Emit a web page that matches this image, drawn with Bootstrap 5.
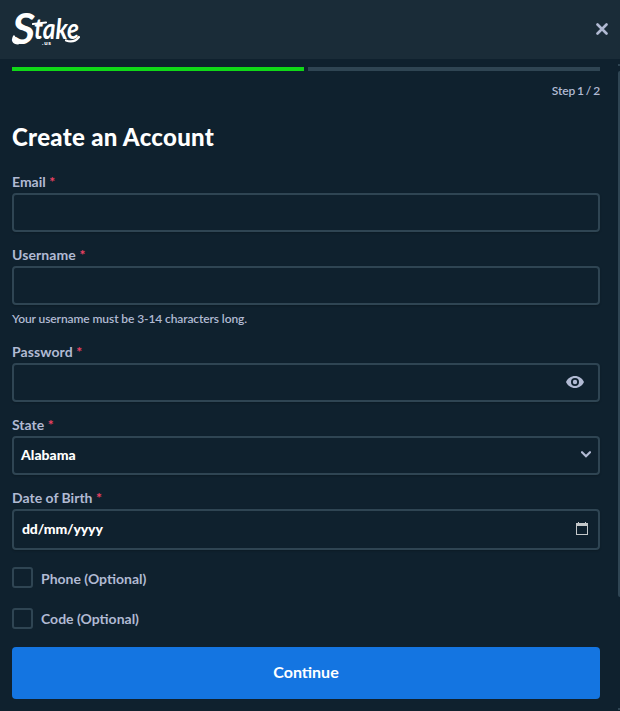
<!DOCTYPE html>
<html lang="en" data-bs-theme="dark">
<head>
<meta charset="utf-8">
<meta name="viewport" content="width=device-width, initial-scale=1">
<title>Create an Account</title>
<link href="https://cdn.jsdelivr.net/npm/bootstrap@5.3.0/dist/css/bootstrap.min.css" rel="stylesheet">
<style>
body{background:#0f212e;color:#b1bad3;font-family:Lato,"Open Sans",sans-serif;height:711px;overflow:hidden;font-size:14px}
.top-bar{height:59px;background:#1a2c38;padding:0 12px}
.brand{overflow:visible}
.close-btn{width:12px;height:12px;margin:-2px 0 0;color:#b1bad3;line-height:0}
.sheet{padding:8px 20px 0 12px}
.steps{gap:4px}
.step-bar{height:4px;background:#2f4553}
.step-bar.done{background:#10d818}
.step-text{font-size:12px;line-height:16px;margin-top:12px;font-weight:600;letter-spacing:-.1px;word-spacing:-1px}
.title{font-size:24px;line-height:30px;font-weight:900;color:#fff;margin:23px 0 0;letter-spacing:.3px}
.fields{margin-top:21px}
.field{margin-bottom:14px}
.field .form-label{display:block;font-size:14px;font-weight:700;line-height:18px;margin:0 0 2px}
.req{color:#ed4163;margin-left:0}
.name-label{letter-spacing:.1px}
.box{height:39px;border:2px solid #2f4553!important;border-radius:4px;background:#0f212e!important;color:#fff;font-size:14px;font-weight:900;letter-spacing:0;padding:0 7px 2px;box-shadow:0 1px 2px #0003}
.box.tall{height:41px;padding:0 10px 2px 8px;letter-spacing:-.15px}
.eye-box{padding:0 14px 1px}
.hint{font-size:12px;line-height:16px;font-weight:600;margin-top:6px;letter-spacing:-.1px}
.field.hinted{margin-bottom:16px}
.form-check.opt{min-height:21px;margin:0;padding:0;gap:8px}
.opt .form-check-input{width:21px;height:21px;margin:0;float:none;border:2px solid #2f4553;border-radius:3px;background-color:#0f212e}
.opt label{font-weight:700;line-height:18px;padding-top:3px}
.opt.phone{margin-top:17px}
.opt.code{margin-top:20px}
.opt.code label{padding-top:2px}
.go{height:52px;background:#1475e1;color:#fff;font-size:16px;font-weight:700;border:0;border-radius:4px;margin-top:18px;padding:0 0 2px}
.scroll-thumb{position:absolute;right:0;top:71px;width:2px;height:526px;background:#2f4553;border-radius:2px 0 0 2px}
.scroll-tip{position:absolute;right:0;width:2px;height:2px;background:#2f4553}
</style>
<script src="https://cdn.jsdelivr.net/npm/bootstrap@5.3.0/dist/js/bootstrap.bundle.min.js"></script>
</head>
<body class="position-relative">
<header class="top-bar d-flex align-items-center justify-content-between">
  <svg class="brand" width="70" height="38" viewBox="0 0 70 38" fill="#fff" role="img" aria-label="Stake.us">
    <g font-family="Lato,sans-serif" font-style="italic" font-weight="700">
      <text x="0" y="33" font-size="42" textLength="23" lengthAdjust="spacingAndGlyphs">S</text>
      <text x="22" y="28" font-size="28" textLength="45" lengthAdjust="spacingAndGlyphs">take</text>
    </g>
    <text x="30" y="33.500" font-size="6" font-weight="900" font-family="Lato,sans-serif" textLength="9">.us</text>
    <path d="M21 13l13-1.500M54 29.500Q62 32.500 67 26M2 25.500Q-1 32 6 32.500" fill="none" stroke="#fff" stroke-width="2.200" stroke-linecap="round"/>
  </svg>
  <button class="btn p-0 border-0 close-btn" aria-label="Close">
    <svg width="12" height="12" viewBox="0 0 12 12"><path d="M1.500 1.500l9 9m0-9l-9 9" stroke="currentColor" stroke-width="2.600" stroke-linecap="round"/></svg>
  </button>
</header>
<main class="sheet">
  <div class="steps d-flex"><div class="step-bar done flex-fill"></div><div class="step-bar flex-fill"></div></div>
  <div class="step-text text-end">Step 1 / 2</div>
  <h1 class="title">Create an Account</h1>
  <form class="fields">
    <div class="field"><label class="form-label" for="em">Email <span class="req">*</span></label><input id="em" class="form-control box"></div>
    <div class="field hinted"><label class="form-label name-label" for="un">Username <span class="req">*</span></label><input id="un" class="form-control box"><div class="hint">Your username must be 3-14 characters long.</div></div>
    <div class="field"><label class="form-label name-label">Password <span class="req">*</span></label>
      <div class="box eye-box d-flex align-items-center justify-content-end"><svg width="18" height="12" viewBox="0 0 18 12"><path fill="#b1bad3" fill-rule="evenodd" d="M9 0C5 0 1.600 2.400 0 6c1.600 3.600 5 6 9 6s7.400-2.400 9-6C16.400 2.400 13 0 9 0zm0 10a4 4 0 110-8 4 4 0 010 8zm0-1.800a2.200 2.200 0 100-4.400 2.200 2.200 0 000 4.400z"/></svg></div></div>
    <div class="field"><label class="form-label">State <span class="req">*</span></label>
      <div class="box d-flex align-items-center justify-content-between"><span>Alabama</span><svg width="10" height="7" viewBox="0 0 10 7"><path d="M1 1.200l4 4 4-4" fill="none" stroke="#b1bad3" stroke-width="2.200" stroke-linecap="round"/></svg></div></div>
    <div class="field mb-0"><label class="form-label">Date of Birth <span class="req">*</span></label>
      <div class="box tall d-flex align-items-center justify-content-between"><span>dd/mm/yyyy</span><svg width="12" height="13" viewBox="0 0 12 13"><path fill="#c4c8ca" fill-rule="evenodd" d="M2 0h1v1h6V0h1v1h2v12H0V1h2zM1 4v8h10V4z"/></svg></div></div>
    <div class="form-check opt phone d-flex"><input class="form-check-input" type="checkbox" id="ph"><label for="ph">Phone (Optional)</label></div>
    <div class="form-check opt code d-flex"><input class="form-check-input" type="checkbox" id="co"><label for="co">Code (Optional)</label></div>
    <button type="button" class="btn go w-100">Continue</button>
  </form>
</main>
<div class="scroll-tip" style="top:64px"></div><div class="scroll-thumb"></div><div class="scroll-tip" style="top:708px"></div>
</body>
</html>
